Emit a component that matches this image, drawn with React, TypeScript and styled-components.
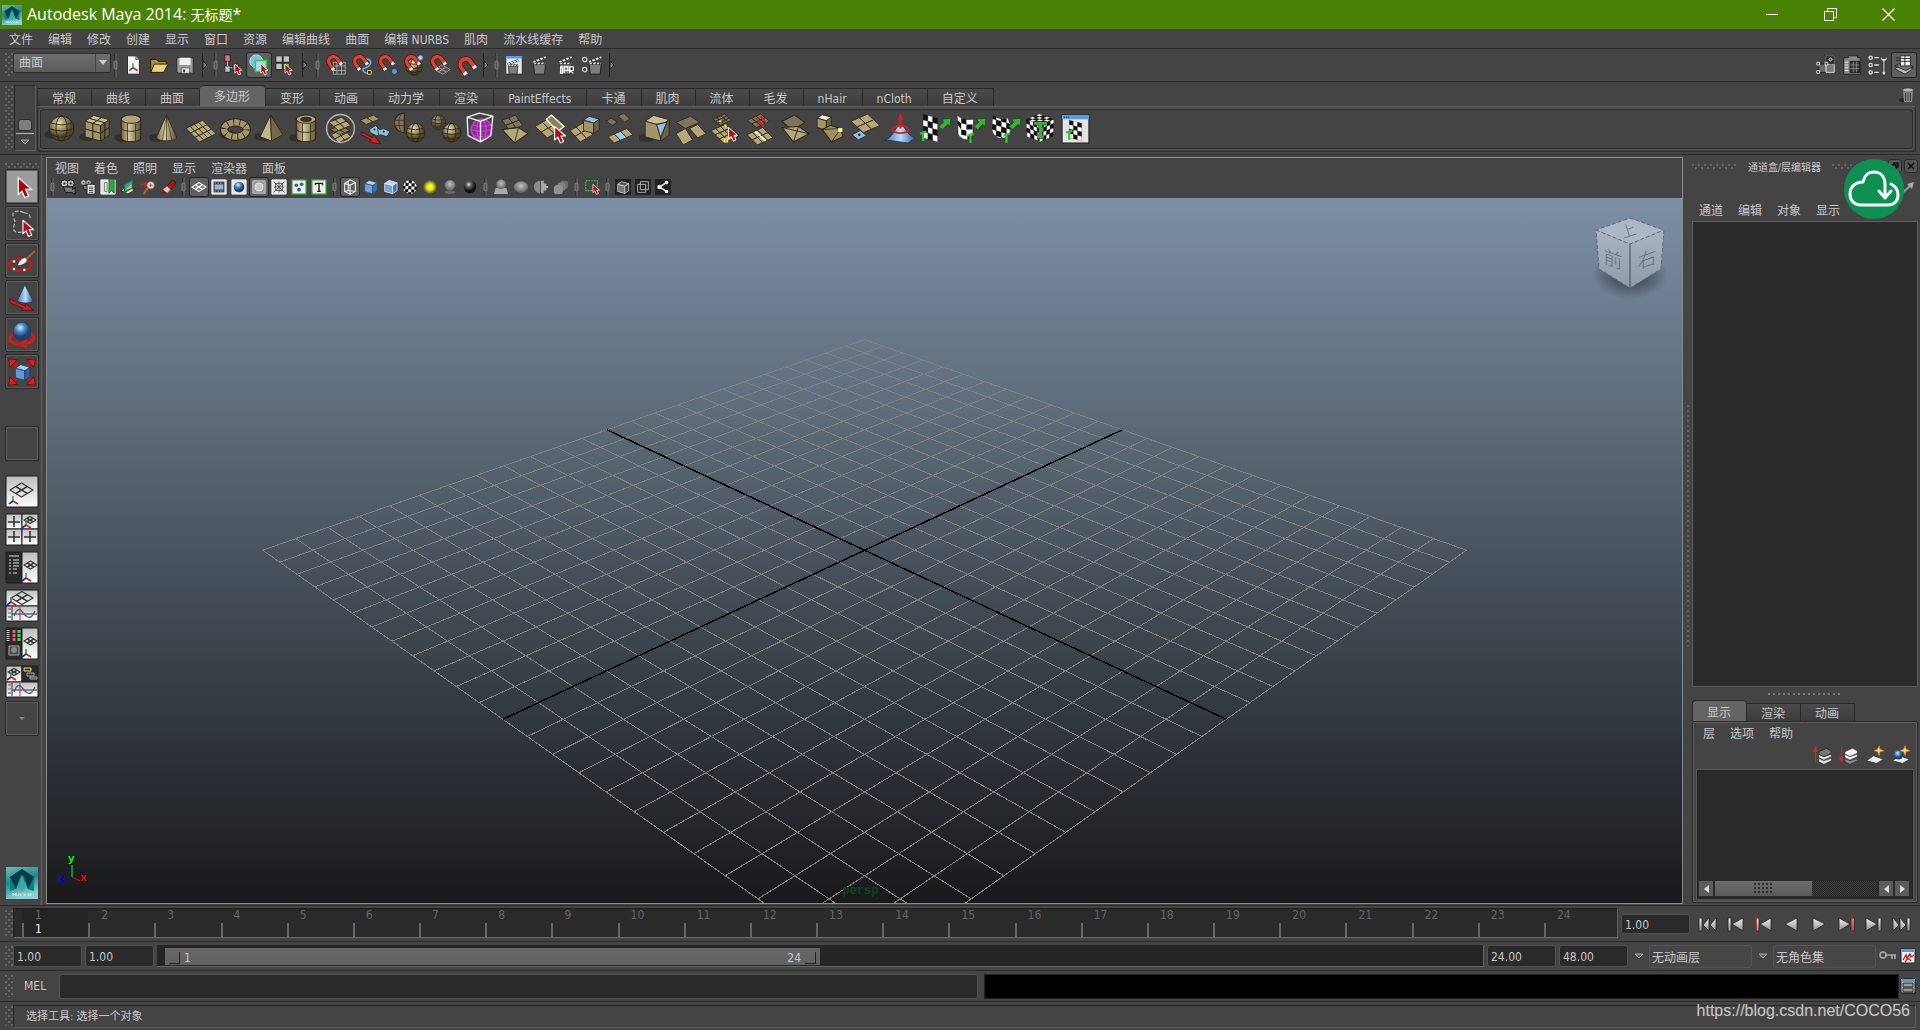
import React, { ReactNode } from 'react';
import styled, { createGlobalStyle, css } from 'styled-components';

const Global = createGlobalStyle`
  * { box-sizing: border-box; }
  html, body { margin: 0; padding: 0; background: #444; }
  body, button, input, select {
    font-family: 'DejaVu Sans Condensed', 'Noto Sans CJK SC', sans-serif;
    font-size: 12px;
    color: #c8c8c8;
  }
  button { background: none; border: 0; padding: 0; margin: 0; }
  svg { display: block; }
`;

/* ---------- drawing helpers ---------- */

type Pt = [number, number];
const TAN = '#a89a6c';
const INK = '#2b2514';

/** A grid of cells spanned by two edge vectors. */
const Sheet = ({ o, u, v, n = 2, m = 2, fill = TAN, alt, line = INK, w = 0.8 }: {
  o: Pt; u: Pt; v: Pt; n?: number; m?: number; fill?: string; alt?: string; line?: string; w?: number;
}) => {
  const at = (a: number, b: number) => `${o[0] + u[0] * a + v[0] * b},${o[1] + u[1] * a + v[1] * b}`;
  const cells: ReactNode[] = [];
  for (let i = 0; i < n; i++) {
    for (let j = 0; j < m; j++) {
      cells.push(
        <polygon
          key={`${i}-${j}`}
          points={[at(i / n, j / m), at((i + 1) / n, j / m), at((i + 1) / n, (j + 1) / m), at(i / n, (j + 1) / m)].join(' ')}
          fill={alt && (i + j) % 2 ? alt : fill}
          stroke={line}
          strokeWidth={w}
          strokeLinejoin="round"
        />
      );
    }
  }
  return <g>{cells}</g>;
};

const Ball = ({ x, y, r, fill = 'url(#tanBall)', line = INK, w = 0.9, o = 1 }: {
  x: number; y: number; r: number; fill?: string; line?: string; w?: number; o?: number;
}) => (
  <g stroke={line} strokeWidth={w} fill="none" opacity={o}>
    <circle cx={x} cy={y} r={r} fill={fill} />
    <ellipse cx={x} cy={y} rx={r * 0.45} ry={r} />
    <path d={`M${x - r * 0.85} ${y - r * 0.45}q${r * 0.85} ${r * 0.3} ${r * 1.7} 0M${x - r} ${y}q${r} ${r * 0.4} ${r * 2} 0M${x - r * 0.85} ${y + r * 0.5}q${r * 0.85} ${r * 0.4} ${r * 1.7} 0`} />
  </g>
);

const Box = ({ x, y, s, a = '#cdbf90', b = '#a3956a', c = '#6d6241', line = INK, n = 1 }: {
  x: number; y: number; s: number; a?: string; b?: string; c?: string; line?: string; n?: number;
}) => (
  <g>
    <Sheet o={[x, y]} u={[s, s * 0.28]} v={[s * 0.55, -s * 0.38]} n={n} m={n} fill={a} line={line} />
    <Sheet o={[x, y]} u={[s, s * 0.28]} v={[0, s]} n={n} m={n} fill={b} line={line} />
    <Sheet o={[x + s, y + s * 0.28]} u={[s * 0.55, -s * 0.38]} v={[0, s]} n={n} m={n} fill={c} line={line} />
  </g>
);

const Cursor = ({ x, y, k = 1 }: { x: number; y: number; k?: number }) => (
  <path
    transform={`translate(${x} ${y}) scale(${k})`}
    d="M0 0v11l2.6-2.3 2 4.6 2.6-1.2-2-4.4h3.6z"
    fill="#b80d12" stroke="#fff" strokeWidth="0.9" strokeLinejoin="round"
  />
);

const Shade = ({ x = 9, y = 24 }: { x?: number; y?: number }) => (
  <ellipse cx={x} cy={y} rx="8" ry="4" fill="#262626" opacity="0.65" />
);

const Magnet = ({ x = 0, y = 0, k = 1.15 }: { x?: number; y?: number; k?: number }) => (
  <g transform={`translate(${x} ${y}) scale(${k}) rotate(-35 8 7)`}>
    <path d="M3.5 13V7a4.5 4.5 0 0 1 9 0v6" fill="none" stroke="#5c0d0a" strokeWidth="4.4" />
    <path d="M3.5 13V7a4.5 4.5 0 0 1 9 0v6" fill="none" stroke="#d8432f" strokeWidth="3.2" />
    <path d="M1.9 11.500h3.200v2.400H1.900zM10.900 11.500h3.200v2.400h-3.200z" fill="#f1f1f1" />
  </g>
);

const Clap = ({ x = 0, y = 0 }: { x?: number; y?: number }) => (
  <g transform={`translate(${x} ${y})`}>
    <path d="M1 10h13l-1 11H2z" fill="#7d7d7d" stroke="#1d1d1d" />
    <path d="M1 10.500h13V8H1z" fill="#eee" stroke="#1d1d1d" strokeWidth="0.5" />
    <path d="M0 6.500L14 1l1 2.600L1 9z" fill="#f4f4f4" stroke="#1d1d1d" strokeWidth="0.6" />
    <path d="M3 5.600l1.500 2M7 4l1.500 2M11 2.400l1.500 2M4 10.500L5.500 8M8 10.500L9.500 8M12 10.500L13 8" stroke="#1d1d1d" strokeWidth="1.300" />
  </g>
);

const Tri3 = ({ x, y }: { x: number; y: number }) => (
  <g strokeWidth="1.6" fill="none">
    <path d={`M${x} ${y}v-5`} stroke="#18b818" />
    <path d={`M${x} ${y}l5 3`} stroke="#e01b1b" />
    <path d={`M${x} ${y}l-4 3`} stroke="#2222e0" />
  </g>
);

const GreenArrow = ({ x, y }: { x: number; y: number }) => (
  <path transform={`translate(${x} ${y})`} d="M0 8l5-4-2-3 9-1-1 8-2-2-5 5z" fill="#3cae3c" stroke="#124a12" strokeWidth="0.7" />
);
const GreenT = ({ x, y }: { x: number; y: number }) => (
  <path transform={`translate(${x} ${y})`} d="M0 2l6-2M3 1v8" stroke="#35c435" strokeWidth="2.2" fill="none" />
);

/* ---------- icon sets ---------- */

const files: Record<string, ReactNode> = {
  new: <><path d="M6 2h9l4 4v16H6z" fill="#f4f4f4" stroke="#222" /><path d="M15 2v4h4" fill="#aaa" stroke="#222" strokeWidth="0.6" /><Tri3 x={12} y={15} /></>,
  open: <><path d="M3 20V6h6l2 2h9v4" fill="#b18d35" stroke="#201a08" /><path d="M3 20l4-9h15l-5 9z" fill="#ecd07c" stroke="#201a08" /></>,
  save: <><path d="M3 4h18v17H5l-2-2z" fill="#9a9a9a" stroke="#222" /><path d="M6 4h12v8H6z" fill="#f0f0f0" /><path d="M8 15h9v6H8z" fill="#ddd" stroke="#333" strokeWidth="0.6" /><path d="M10 17h2v3h-2z" fill="#333" /></>,
};

const modes: Record<string, ReactNode> = {
  hierarchy: <><path d="M3 1h6v7H3z" fill="#e07070" stroke="#222" /><path d="M3 13h6v7H3z" fill="#bbb" stroke="#222" /><path d="M6 8v5M9 15h5" stroke="#ccc" /><path d="M12 11h6v7h-6z" fill="#999" stroke="#222" /><Cursor x={14} y={11} k={0.9} /></>,
  object: <><circle cx="9" cy="8" r="7" fill="#86bdec" stroke="#d6ebff" /><path d="M8 7h12v12H8z" fill="#a7d7f5" stroke="#26d43a" strokeWidth="1.6" /><Cursor x={14} y={11} k={0.9} /></>,
  component: <><path d="M2 2h7v7H2zM10 2h7v7h-7zM2 10h7v7H2z" fill="#c4c4c4" stroke="#222" /><path d="M10 10h7v7h-7z" fill="#3fd050" stroke="#222" /><Cursor x={12} y={11} k={0.9} /></>,
};

const snaps: Record<string, ReactNode> = {
  grid: <><path d="M9 9h13v13H9zM13 9v13M18 9v13M9 13h13M9 18h13" fill="none" stroke="#a9a9a9" /><Magnet /></>,
  curve: <><path d="M12 6c14-3 10 8 4 9s-2 7 5 6" fill="none" stroke="#79aee0" strokeWidth="1.6" /><path d="M18 18h4v4h-4z" fill="#222" stroke="#f1df61" /><Magnet /></>,
  point: <><Magnet /><circle cx="19" cy="19" r="3.4" fill="#5c96d4" stroke="#1d3350" /></>,
  center: <><Ball x={12} y={14} r={9} /><Magnet /><circle cx="19" cy="4" r="3" fill="#9fd0ff" stroke="#2a4c6e" /></>,
  plane: <><Sheet o={[6, 17]} u={[8, -5]} v={[9, 5]} fill="#4a4a4a" line="#b5b5b5" /><Magnet /></>,
  live: <Magnet x={1} y={2} k={1.35} />,
};

const renders: Record<string, ReactNode> = {
  view: <><path d="M3 2h18v20H3z" fill="#e9e9e9" stroke="#222" /><path d="M3 2h18v3H3z" fill="#4f9fe8" /><g transform="translate(5 5) scale(.8)"><Clap /></g></>,
  frame: <Clap x={4} y={1} />,
  ipr: <><Clap x={4} y={1} /><path d="M6 14h2v7H6zM10 21v-7h4v4h-4M16 21v-7h4v4h-4l4 3" fill="none" stroke="#fff" strokeWidth="1.3" /></>,
  settings: <><Clap x={8} y={1} /><circle cx="4" cy="6" r="2.4" fill="none" stroke="#ccc" strokeWidth="1.4" /><circle cx="4" cy="17" r="2.4" fill="none" stroke="#ccc" strokeWidth="1.4" /></>,
};

const sidebars: Record<string, ReactNode> = {
  toolkit: <><path d="M4 11h17v9H4z" fill="#6c6c6c" stroke="#1f1f1f" /><path d="M12 11h9v9h-9z" fill="#777" stroke="#eee" /><path d="M12 2h9v9h-9z" fill="#2a2a2a" stroke="#777" strokeDasharray="2 1" /><path d="M2 9h3v3H2zM2 18h3v3H2zM11 9h3v3h-3z" fill="#444" stroke="#ddd" /><circle cx="17" cy="6" r="1.600" fill="none" stroke="#eee" /></>,
  attribute: <><path d="M3 4h5V2h10v2h3v18H3z" fill="#8a8a8a" stroke="#1f1f1f" /><path d="M4 9h4M4 12h4M4 15h4M4 18h4" stroke="#eee" /><path d="M10 8h10v12H10z" fill="#3a3a3a" stroke="#111" /><path d="M13.500 8v12M17 8v12M10 12h10M10 16h10" stroke="#999" strokeWidth="0.700" /></>,
  tool: <><g fill="none" stroke="#ddd" strokeWidth="1.4"><circle cx="4" cy="4" r="1.800" /><circle cx="4" cy="12" r="1.800" /><circle cx="4" cy="20" r="1.800" /><path d="M8 4h5M8 12h5M8 20h5" /></g><path d="M15 2v4l2.500 2v11a2 2 0 1 0 2 0V8L22 6V2l-2 3h-3z" fill="#ddd" stroke="#222" strokeWidth="0.7" /></>,
  channel: <><path d="M2 16l8-5 12 5-9 6z" fill="#bcbcbc" stroke="#222" /><path d="M2 13l8-4 12 5-8 4z" fill="#777" stroke="#222" /><path d="M8 2h11v11H8z" fill="#f5f5f5" stroke="#222" /><path d="M8 5h11M8 8h11M3 4h4M3 7h4M13 2v11" stroke="#222" /></>,
};

const shelf: [string, ReactNode][] = [
  ['球体', <><Shade x={8} y={22} /><Ball x={17} y={16} r={12} /></>],
  ['立方体', <><Shade x={8} y={24} /><Box x={6} y={9} s={15} n={2} /></>],
  ['圆柱体', <><Shade x={8} y={25} /><path d="M7 7v18c0 5 19 5 19 0V7z" fill="url(#tanBar)" stroke={INK} /><ellipse cx="16.500" cy="7" rx="9.500" ry="4" fill="#b3a578" stroke={INK} /><path d="M7 15c0 5 19 5 19 0M13 11v17M21 11v17" fill="none" stroke={INK} strokeWidth="0.8" /></>],
  ['圆锥体', <><Shade x={8} y={25} /><path d="M17 3L7 25c2 4 18 4 20 0z" fill="url(#tanBar)" stroke={INK} strokeWidth="0.8" /><path d="M17 3l-4 24M17 3v25M17 3l5 24" stroke={INK} strokeWidth="0.6" /></>],
  ['平面', <Sheet o={[2, 16]} u={[16, -8]} v={[13, 13]} n={4} m={3} fill="#b5a778" />],
  ['圆环', <><Shade x={8} y={22} /><ellipse cx="16" cy="17" rx="11" ry="7" fill="none" stroke={INK} strokeWidth="8" /><ellipse cx="16" cy="17" rx="11" ry="7" fill="none" stroke="#a4966a" strokeWidth="6" /><ellipse cx="16" cy="17" rx="11" ry="7" fill="none" stroke={INK} strokeWidth="6" strokeDasharray="0.8 5" /></>],
  ['棱锥', <><Shade x={8} y={24} /><path d="M16 3L6 24l11 4z" fill="#c4b688" stroke={INK} strokeWidth="0.8" /><path d="M16 3l1 25 11-6z" fill="#776b47" stroke={INK} strokeWidth="0.8" /></>],
  ['管道', <><Shade x={8} y={25} /><path d="M7 7v18c0 5 19 5 19 0V7z" fill="url(#tanBar)" stroke={INK} /><ellipse cx="16.500" cy="7" rx="9.500" ry="4" fill="#b3a578" stroke={INK} /><ellipse cx="16.500" cy="7" rx="5" ry="2" fill="#3b341f" stroke={INK} /><path d="M7 16c0 5 19 5 19 0M13 11v17M21 11v17" fill="none" stroke={INK} strokeWidth="0.8" /></>],
  ['结合', <><Sheet o={[7, 22]} u={[12, -6]} v={[7, 8]} fill="#b5a778" /><Sheet o={[6, 17]} u={[10, -4]} v={[9, 5]} fill="#8d805a" /><Sheet o={[5, 10]} u={[12, -5]} v={[9, 8]} fill="#b5a778" /><circle cx="16" cy="16" r="13.500" fill="none" stroke="#b4b4b4" strokeWidth="1.4" /></>],
  ['分离', <><Sheet o={[1, 8]} u={[13, -5]} v={[6, 4]} m={1} fill="#a39567" /><path d="M10 17l6-4 4 4 4-1 6 3-3 5-6-2-4 1-6-3z" fill="#8cc0de" stroke={INK} strokeWidth="0.8" /><path d="M18 15l1 7" stroke={INK} strokeWidth="0.8" /><circle cx="15" cy="17" r="1" fill="#123" /><circle cx="24" cy="19" r="1" fill="#123" /><path d="M2 19l11 6 1-3 7 9-11-2 2-2L2 22z" fill="#d41f26" stroke="#4d0606" strokeWidth="0.7" /></>],
  ['镜像', <><path d="M10 1a9 9 0 0 0 0 19z" fill="#7d7459" stroke={INK} /><path d="M10 2v17M2 8h8M2 13h8M7 2c-3 5-3 12 0 17" fill="none" stroke={INK} strokeWidth="0.7" /><Ball x={21} y={20} r={9} /></>],
  ['复制', <><Ball x={9} y={10} r={7} o={0.6} /><Ball x={22} y={20} r={9} /></>],
  ['代理', <><Ball x={17} y={17} r={10} fill="#7d3a88" line="#e22fe6" w={1.2} /><path d="M3 5l13 4v20L4 23zM16 9l12-5-2 19-10 6M3 5l12-4 13 3" fill="none" stroke="#f2f2f2" strokeWidth="1.300" strokeLinejoin="round" /></>],
  ['减少', <><Sheet o={[3, 8]} u={[13, -5]} v={[7, 10]} fill="#7d7459" /><path d="M3 17l12 13 13-9-9-6z" fill="#b5a778" stroke={INK} /><path d="M3 17l16-2-4 15" fill="none" stroke={INK} strokeWidth="0.8" /></>],
  ['分割', <><Sheet o={[1, 14]} u={[14, -8]} v={[12, 11]} n={2} m={2} fill="#b5a778" /><path d="M12 7l5-4 12 11-6 5z" fill="#8c8055" stroke="#f2f2f2" strokeWidth="1.4" /><Cursor x={20} y={14} k={1.2} /></>],
  ['挤出', <><Sheet o={[1, 18]} u={[12, -7]} v={[10, 11]} fill="#b5a778" /><Box x={14} y={8} s={10} a="#8cc0e6" /></>],
  ['桥接', <><Sheet o={[2, 9]} u={[5, -3]} v={[6, 4]} n={1} m={1} fill="#7d7459" /><Sheet o={[14, 4]} u={[5, -3]} v={[6, 6]} n={1} m={1} fill="#7d7459" /><Sheet o={[4, 24]} u={[18, -8]} v={[6, 6]} n={3} m={1} fill="#b5a778" alt="#9fcdf0" /></>],
  ['附加', <><Shade x={7} y={25} /><Box x={6} y={9} s={15} /><path d="M17 12l10-2-6 15z" fill="#8cc0e6" stroke={INK} /></>],
  ['合并', <><Sheet o={[2, 10]} u={[14, -6]} v={[9, 6]} n={1} m={1} fill="#7d7459" /><Sheet o={[2, 21]} u={[9, -5]} v={[7, 11]} n={1} m={1} fill="#b5a778" /><Sheet o={[15, 16]} u={[8, -4]} v={[8, 9]} n={1} m={1} fill="#b5a778" /></>],
  ['目标焊接', <><Sheet o={[4, 7]} u={[11, -5]} v={[7, 6]} fill="#7d7459" n={3} m={3} /><Sheet o={[2, 18]} u={[14, -6]} v={[12, 12]} fill="#b5a778" n={3} m={3} /><path d="M10 8h2v2h-2zM15 12h2v2h-2z" fill="#f5ee55" /><path d="M15 26h3v3h-3z" fill="none" stroke="#f5ee55" strokeWidth="1.200" /><Cursor x={19} y={15} /></>],
  ['折痕', <><Sheet o={[3, 8]} u={[13, -6]} v={[9, 7]} fill="#7d7459" n={3} /><path d="M12 6l7 8M16 4l6 7" stroke="#d41f26" strokeWidth="1.800" /><Sheet o={[3, 22]} u={[15, -7]} v={[10, 10]} fill="#b5a778" n={3} /><path d="M11 19l10 9" stroke="#fff" strokeWidth="1.4" /></>],
  ['三角化', <><path d="M3 9l12-6 10 7-12 8z" fill="#7d7459" stroke={INK} /><path d="M3 15l11 14 15-8-10-7z" fill="#b5a778" stroke={INK} /><path d="M3 15l26 6M14 29l5-15" stroke={INK} strokeWidth="0.9" /></>],
  ['倒角', <><Box x={3} y={6} s={9} a="#e8e8e0" /><path d="M8 17l9 12 11-5-2-8-10-3z" fill="#9d8f63" stroke={INK} /><path d="M8 17l18-1-9 13" fill="none" stroke={INK} strokeWidth="0.8" /><path d="M24 16h3v3h-3z" fill="#fff" stroke="#f5ee55" /></>],
  ['提取', <><Sheet o={[2, 9]} u={[16, -7]} v={[12, 11]} fill="#b5a778" /><Sheet o={[3, 22]} u={[8, -4]} v={[6, 5]} n={1} m={1} fill="#8cc0e6" /><circle cx="10" cy="22" r="1.200" fill="#123" /></>],
  ['雕刻', <><path d="M1 27c9-3 11-15 15-15s6 12 15 13l-8 5z" fill="url(#blueBar)" stroke="#1c2c4a" strokeWidth="0.7" /><ellipse cx="16" cy="17" rx="8" ry="3.500" fill="none" stroke="#d41f26" strokeWidth="1.800" /><path d="M16 16V6" stroke="#d41f26" strokeWidth="1.800" /><path d="M16 1l3 7h-6z" fill="#d41f26" /></>],
  ['平面映射', <><Sheet o={[4, 2]} u={[14, 4]} v={[0, 23]} n={3} m={4} fill="#111" alt="#fff" line="#333" w={0.3} /><GreenArrow x={19} y={6} /><GreenT x={1} y={19} /></>],
  ['圆柱映射', <><path d="M3 3c4 4 10 5 16 4l-1 19c-6 2-10 1-14-4z" fill="#fff" stroke="#222" strokeWidth="0.6" /><path d="M7 6l5 1v5l-5-1zM3 8l4 3v6l-3-4zM12 12h6v5h-6zM7 17l5 1v5l-5-1zM13 23h5v3l-5 1z" fill="#111" /><GreenArrow x={19} y={6} /><GreenT x={13} y={21} /></>],
  ['球形映射', <><clipPath id="ballClip"><path d="M4 3c3 4 9 5 14 3l3 8c0 16-18 14-18 1z" /></clipPath><g clipPath="url(#ballClip)"><Sheet o={[2, 1]} u={[20, 6]} v={[0, 26]} n={4} m={5} fill="#111" alt="#fff" line="#333" w={0.3} /></g><GreenArrow x={19} y={6} /><GreenT x={14} y={21} /></>],
  ['自动映射', <><Sheet o={[2, 7]} u={[14, 5]} v={[1, 17]} n={4} m={4} fill="#111" alt="#fff" line="#333" w={0.3} /><Sheet o={[16, 12]} u={[13, -5]} v={[-1, 17]} n={4} m={4} fill="#111" alt="#fff" line="#333" w={0.3} /><Sheet o={[2, 7]} u={[14, 5]} v={[13, -5]} n={4} m={4} fill="#111" alt="#fff" line="#333" w={0.3} /><path d="M10 11h12M16 11v13M13 24h6" stroke="#124a12" strokeWidth="4" /><path d="M10 11h12M16 11v13M13 24h6" stroke="#3fae3f" strokeWidth="2.800" /></>],
  ['纹理编辑器', <><path d="M3 3h26v27H3z" fill="#e4e4e4" stroke="#222" /><path d="M3 3h26v4H3z" fill="#4f9fe8" /><path d="M5 5h1M7 5h1M9 5h1" stroke="#123" /><Sheet o={[10, 8]} u={[12, 3]} v={[0, 17]} n={3} m={4} fill="#111" alt="#fff" line="#333" w={0.3} /><GreenT x={7} y={18} /></>],
];

const frame = (inner: ReactNode) => <><path d="M1 1h16v16H1z" fill="#e4e4e4" stroke="#f5f5f5" />{inner}</>;
const greenFrame = (inner: ReactNode) => <><path d="M1 1h16v16H1z" fill="#eee" stroke="#2b9a2b" strokeWidth="1.4" />{inner}</>;
const camera = <><circle cx="5" cy="5" r="4" fill="#c4c4c4" stroke="#1a1a1a" /><circle cx="12" cy="5" r="4" fill="#b0b0b0" stroke="#1a1a1a" /><circle cx="5" cy="5" r="1.200" fill="#222" /><circle cx="12" cy="5" r="1.200" fill="#222" /><path d="M4 9h10v3l3-2v7l-4-2H6z" fill="#7c7c7c" stroke="#111" /></>;

const panelIcons: ([string, ReactNode, boolean?] | null)[] = [
  null,
  ['选择摄影机', camera],
  ['摄影机属性', <><g transform="scale(.8)">{camera}</g><path d="M8 6h9v11H8z" fill="#f0f0f0" stroke="#222" /><path d="M10 9h5M10 11h5M10 13h5M10 15h5" stroke="#333" /></>],
  ['书签', frame(<><path d="M5 4h3v10H5z" fill="none" stroke="#777" /><path d="M10 0h6v16l-3-3-3 3z" fill="#2bab34" stroke="#0d4d13" strokeWidth="0.700" /></>)],
  ['图像平面', <><path d="M1 13l6-4 10 3-8 5z" fill="#ddd" stroke="#222" /><path d="M5 6l9-5v9l-9 5z" fill="#4f86d8" stroke="#1c7a1c" strokeWidth="1.400" /><path d="M6 12l7-6v4z" fill="#e2c33f" /></>],
  ['二维平移缩放', <><path d="M6 1v11M1 6h11" stroke="#d62424" strokeWidth="1.600" strokeDasharray="2 1" /><circle cx="12" cy="7" r="4" fill="#f0d8d8" stroke="#888" /><path d="M12 5v4M10 7h4" stroke="#d62424" /><path d="M9 10l-5 7" stroke="#a86b22" strokeWidth="2.200" /></>],
  ['油性铅笔', <><path d="M8 8l6-7 4 3-6 8z" fill="#b81414" stroke="#3a0505" /><path d="M3 12l5-4 4 4-4 4z" fill="#e8c8b0" stroke="#555" strokeWidth="0.600" /><path d="M3 12l-1 5 6-1z" fill="#8c1212" /></>],
  null,
  ['栅格', <Sheet o={[1, 9]} u={[8, -5]} v={[8, 5]} fill="#777" line="#f2f2f2" w={1.2} />, true],
  ['胶片门', frame(<><path d="M3 3h12v12H3z" fill="#1d1d1d" /><path d="M4 6h10v6H4z" fill="#8db8e0" /><path d="M4 4.500h10M4 13.500h10" stroke="#eee" strokeDasharray="2 1" /></>)],
  ['分辨率门', frame(<circle cx="9" cy="9" r="6" fill="url(#blueBall)" />)],
  ['门遮罩', <><path d="M2 2h14v14H2z" fill="#9b9b9b" stroke="#ccc" /><circle cx="9" cy="9" r="4.500" fill="#c9c9c9" stroke="#eee" /></>, true],
  ['区域图', frame(<path d="M3 3l12 12M15 3L3 15M9 3v12M3 9h12M5 5h8v8H5z" fill="none" stroke="#555" />)],
  ['安全动作', greenFrame(<><circle cx="6" cy="7" r="2" fill="#2b5b9a" /><circle cx="12" cy="6" r="2" fill="#2b5b9a" /><circle cx="9" cy="12" r="2.200" fill="#2b5b9a" /></>)],
  ['安全标题', greenFrame(<path d="M5 7V5h8v2M9 5v9M7 14h4" fill="none" stroke="#111" strokeWidth="1.500" />)],
  null,
  ['线框', <g fill="none" stroke="#f0f0f0" strokeWidth="1.200"><path d="M3 5l6 2v10l-6-3zM9 7l6-3v10l-6 3M3 5l6-4 6 3M7 3v10l-4 1M7 13l8 1" /></g>, true],
  ['着色', <Box x={3} y={5} s={9} a="#b6d6f5" b="#6fa5dc" c="#3f74ae" line="#2a4f7c" />],
  ['着色线框', <Box x={3} y={5} s={9} a="#b6d6f5" b="#6fa5dc" c="#3f74ae" line="#f5f5f5" />],
  ['纹理', <><clipPath id="checkClip"><circle cx="9" cy="9" r="7.500" /></clipPath><g clipPath="url(#checkClip)"><Sheet o={[1, 1]} u={[17, 1]} v={[-1, 17]} n={5} m={5} fill="#111" alt="#fff" w={0} /></g></>],
  ['灯光', <circle cx="9" cy="9" r="8" fill="url(#yellowGlow)" />],
  ['阴影', <><ellipse cx="9" cy="15" rx="6" ry="2" fill="#666" /><circle cx="9" cy="7" r="6" fill="url(#grayBall)" /></>],
  ['遮挡', <circle cx="9" cy="9" r="7" fill="url(#darkBall)" />],
  null,
  ['隔离', <><path d="M1 17l2-7h12l2 7z" fill="#aaa" /><circle cx="9" cy="6" r="5.500" fill="url(#grayBall)" /></>],
  ['运动模糊', <ellipse cx="9" cy="9" rx="8" ry="6.500" fill="url(#grayBall)" />],
  ['抗锯齿', <><path d="M8 2a7 7 0 0 0 0 14z" fill="#8a8a8a" /><path d="M9 2v14h3v-3h3v-3h2V8h-2V5h-3V2z" fill="#a8a8a8" /></>],
  ['景深', <><rect x="8" y="2" width="9" height="9" rx="3" fill="#6c6c6c" /><rect x="5" y="4" width="9" height="9" rx="3" fill="#808080" /><rect x="1" y="7" width="10" height="10" rx="3" fill="#929292" /></>],
  null,
  ['选择项', <><path d="M2 2h13v11H2z" fill="none" stroke="#35d335" strokeWidth="1.300" strokeDasharray="2 1" /><Cursor x={10} y={6} k={0.85} /></>],
  null,
  ['X 射线', <><path d="M0 0h18v18H0z" fill="#222" /><Box x={3} y={6} s={8} a="#555" b="#777" c="#444" line="#ddd" /></>],
  ['X 射线活动', <><path d="M0 0h18v18H0z" fill="#222" /><path d="M3 6h9v9H3zM6 3h9v9H6z" fill="none" stroke="#bbb" /></>],
  ['X 射线关节', <><path d="M0 0h18v18H0z" fill="#222" /><path d="M5 9l8-5M5 9l8 5" stroke="#ddd" strokeWidth="1.800" /><circle cx="5" cy="9" r="2.500" fill="#eee" /><circle cx="13" cy="4" r="2" fill="#eee" /><circle cx="13" cy="14" r="2" fill="#eee" /></>],
];

const tools: [string, ReactNode][] = [
  ['选择', <path d="M12 6v18l4-3.500 3 7 4-2-3-7h6z" fill="#a8090d" stroke="#fff" strokeWidth="1.300" />],
  ['套索', <><path d="M18 4c-8-4-14-1-11 5s0 7 0 12 8 5 12 2" fill="none" stroke="#bbb" strokeWidth="1.300" strokeDasharray="4 2" /><path d="M18 4c5 0 7 3 7 7" fill="none" stroke="#bbb" strokeWidth="1.300" strokeDasharray="4 2" /><Cursor x={17} y={12} k={1.3} /></>],
  ['绘制选择', <><ellipse cx="14" cy="20" rx="12" ry="6.500" fill="none" stroke="#d01515" strokeWidth="2.400" /><path d="M11 21c2-7 6-8 9-9l2 3c-1 3-5 6-11 6z" fill="#f2f2f2" stroke="#222" strokeWidth="0.700" /><path d="M20 12l9-8 2 2-9 9z" fill="#a0602e" stroke="#222" strokeWidth="0.500" /><path d="M6 15h3v3H6zM6 23h3v3H6zM17 24h3v3h-3z" fill="#fff7bf" stroke="#333" strokeWidth="0.600" /></>],
  ['移动', <><path d="M3 17l17 8-1-4 9 8-13 0 2-2L3 21z" fill="#d31b1b" stroke="#4d0606" strokeWidth="0.700" /><path d="M19 2l9 17c-2 3-14 3-17 0z" fill="url(#blueBar)" stroke="#17304d" strokeWidth="0.700" /></>],
  ['旋转', <><path d="M6 15c-7 6 0 11 7 10M25 14c8 5 1 11-7 11" fill="none" stroke="#d31b1b" strokeWidth="3.400" /><path d="M21 19l-9 6 9 6z" fill="#d31b1b" /><circle cx="16" cy="12" r="9.500" fill="url(#blueBall)" stroke="#17304d" strokeWidth="0.600" /></>],
  ['缩放', <><path d="M5 4l22 24M27 4L5 28" stroke="#c91414" strokeWidth="3.200" /><path d="M2 2l9 1-8 8zM30 2l-9 1 8 8zM2 30l9-1-8-8zM30 30l-9-1 8-8z" fill="#e01b1b" stroke="#4d0606" strokeWidth="0.600" /><Box x={9} y={12} s={10} a="#a6cdf2" b="#5f9ad8" c="#2f629c" line="#1c3e66" /></>],
];

const paper = (x: number, y: number, w: number, h: number, dark = false) => (
  <path d={`M${x} ${y}h${w}v${h}h${-w}z`} fill={dark ? '#2a2a2a' : 'url(#paper)'} stroke="#1c1c1c" />
);
const mesh = (x: number, y: number, k: number) => (
  <Sheet o={[x, y]} u={[10 * k, -6 * k]} v={[10 * k, 6 * k]} fill="none" line="#333" w={1.2} />
);
const wave = (
  <>{paper(1, 17, 32, 15)}<path d="M3 20h3" stroke="#d22" /><path d="M3 24h3" stroke="#2a2" /><path d="M3 28h3" stroke="#22d" /><path d="M7 18v13M7 25h25" stroke="#333" /><path d="M15 18v13" stroke="#e02020" /><path d="M9 27c5-13 8-3 12 0s6 1 9-5" fill="none" stroke="#3a628c" strokeWidth="1.300" /></>
);
const layouts: [string, ReactNode][] = [
  ['单个透视视图', <>{paper(1, 1, 32, 31)}{mesh(5, 15, 1.15)}<Tri3 x={8} y={26} /></>],
  ['四个视图', <>{paper(1, 1, 16, 15)}{paper(17, 1, 16, 15)}{paper(1, 16, 16, 16)}{paper(17, 16, 16, 16)}<path d="M9 3v11M3 9h12M9 18v11M3 24h12M25 18v11M19 24h12" stroke="#333" strokeWidth="1.600" />{mesh(19, 7, 0.6)}<Tri3 x={21} y={12} /></>],
  ['大纲视图', <>{paper(1, 1, 16, 31, true)}{paper(17, 1, 16, 31)}<path d="M4 5h10M4 9h2M8 9h6M4 12h2M8 12h6M4 15h2M8 15h6M4 18h2M8 18h4M4 22h2M8 22h4" stroke="#ddd" />{mesh(19, 14, 0.65)}<Tri3 x={21} y={27} /></>],
  ['透视与曲线图', <>{paper(1, 1, 32, 16)}{mesh(6, 9, 1.1)}<Tri3 x={6} y={13} />{wave}</>],
  ['超图与透视', <>{paper(1, 1, 16, 31, true)}{paper(17, 1, 16, 31)}<path d="M3 3v12" stroke="#ccc" strokeWidth="3" strokeDasharray="1 1" /><path d="M9 3v12" stroke="#d66" strokeWidth="3" strokeDasharray="3 1" /><path d="M14 3v12" stroke="#5c5" strokeWidth="3" strokeDasharray="3 1" /><path d="M4 19h10v9H4z" fill="#444" stroke="#aaa" /><circle cx="9" cy="23" r="3" fill="#888" />{mesh(19, 14, 0.65)}<Tri3 x={21} y={27} /></>],
  ['透视超图曲线', <>{paper(1, 1, 16, 16)}{paper(17, 1, 16, 16, true)}{mesh(3, 7, 0.6)}<Tri3 x={6} y={12} /><path d="M19 3h7v3h-7z" fill="#333" stroke="#e9e36c" /><path d="M22 8h7v3h-7zM25 12h7v2h-7z" fill="#333" stroke="#aaa" />{wave}</>],
];

const playback: [string, string, boolean, number?][] = [
  ['转到开头', 'M1 4h3v13H1zM11 4v13l-6-6zM18 4v13l-6-6z', false],
  ['后退一帧', 'M2 4h3v13H2zM17 4v13L6 10z', false],
  ['后退到关键帧', 'M3 4h3v13H3zM18 4v13L7 10z', true, 3],
  ['向后播放', 'M16 4v13L4 10z', false],
  ['向前播放', 'M4 4v13l12-7z', false],
  ['前进到关键帧', 'M2 4v13l11-7zM14 4h3v13h-3z', true, 15],
  ['前进一帧', 'M2 4v13l11-7zM14 4h3v13h-3z', false],
  ['转到结尾', 'M1 4v13l6-6zM8 4v13l6-6zM15 4h3v13h-3z', false],
];

const layerIcons: [string, ReactNode][] = [
  ['上移层', <><path d="M3 20V7" stroke="#d22" strokeWidth="1.500" /><path d="M3 1l3 7H0z" fill="#d22" /><path d="M7 16l6 3 9-3v3l-9 4-6-3zM7 11l6 3 9-3v3l-9 4-6-3z" fill="#e6e6e6" stroke="#222" strokeWidth="0.600" /><path d="M7 8l9-4 6 3v3l-9 4-6-3z" fill="#777" stroke="#222" /></>],
  ['下移层', <><path d="M3 2v14" stroke="#d22" strokeWidth="1.500" /><path d="M3 22l3-7H0z" fill="#d22" /><path d="M7 16l6 3 9-3v3l-9 4-6-3z" fill="#8a8a8a" stroke="#222" strokeWidth="0.600" /><path d="M7 11l6 3 9-3v3l-9 4-6-3zM7 8l9-4 6 3v3l-9 4-6-3z" fill="#f3f3f3" stroke="#222" strokeWidth="0.600" /></>],
  ['新建空层', <><path d="M2 19l8-6 12 4-8 5z" fill="#eee" stroke="#222" strokeWidth="0.700" /><path d="M17 1l1 4 5 2-5 1-1 5-2-5-4-1 4-2z" fill="#ffcf5f" stroke="#e08a1a" strokeWidth="0.600" /></>],
  ['从选定对象新建层', <><path d="M2 19l8-6 12 4-8 5z" fill="#eee" stroke="#222" strokeWidth="0.700" /><circle cx="9" cy="12" r="5.500" fill="url(#blueBall)" /><path d="M17 1l1 4 5 2-5 1-1 5-2-5-4-1 4-2z" fill="#ffcf5f" stroke="#e08a1a" strokeWidth="0.600" /></>],
];

const MayaLogo = ({ size }: { size: number }) => (
  <svg width={size} height={size} viewBox="0 0 32 32" aria-label="Maya">
    <path d="M0 0h32v32H0z" fill="url(#logoBg)" />
    <path d="M4 24V10L16 2l12 8v14l-6-2-3-9-3-2-3 2-3 9z" fill="#087f81" />
    <path d="M16 2L4 10l6 12 4-12 2-2 2 2 4 12 6-12z" fill="#033c42" />
    <path d="M16 8l-4 12 4 4 4-4z" fill="#36aaa6" />
    <path d="M7 29v-3l1.500 2 1.500-2v3M12 29l1.500-3 1.500 3M17 26l1.500 1.500L20 26M18.500 27.500V29M22 29l1.500-3 1.500 3" fill="none" stroke="#e8ffff" strokeWidth="0.900" />
  </svg>
);

const Defs = () => (
  <HiddenSvg aria-hidden="true">
    <defs>
      <radialGradient id="tanBall" cx=".4" cy=".3"><stop offset="0" stopColor="#efe3b8" /><stop offset=".5" stopColor="#a4966a" /><stop offset="1" stopColor="#4f4629" /></radialGradient>
      <linearGradient id="tanBar"><stop offset="0" stopColor="#6e6341" /><stop offset=".4" stopColor="#d6c99c" /><stop offset="1" stopColor="#574d2f" /></linearGradient>
      <linearGradient id="blueBar"><stop offset="0" stopColor="#3b76b8" /><stop offset=".5" stopColor="#b5dbff" /><stop offset="1" stopColor="#2c5a92" /></linearGradient>
      <radialGradient id="blueBall" cx=".4" cy=".3"><stop offset="0" stopColor="#d8efff" /><stop offset=".5" stopColor="#4b8bc9" /><stop offset="1" stopColor="#1c436f" /></radialGradient>
      <radialGradient id="grayBall" cx=".5" cy=".4"><stop offset="0" stopColor="#c4c4c4" /><stop offset="1" stopColor="#6e6e6e" /></radialGradient>
      <radialGradient id="darkBall" cx=".4" cy=".3"><stop offset="0" stopColor="#ddd" /><stop offset=".4" stopColor="#666" /><stop offset="1" stopColor="#111" /></radialGradient>
      <radialGradient id="yellowGlow"><stop offset="0" stopColor="#fffc60" /><stop offset=".4" stopColor="#f2ee00" /><stop offset="1" stopColor="#f2ee00" stopOpacity="0" /></radialGradient>
      <linearGradient id="paper" x2="0" y2="1"><stop offset="0" stopColor="#bdbdbd" /><stop offset="1" stopColor="#fff" /></linearGradient>
      <linearGradient id="metal" x2="0" y2="1"><stop offset="0" stopColor="#f2f2f2" /><stop offset="1" stopColor="#8e8e8e" /></linearGradient>
      <linearGradient id="logoBg" x2="0.300" y2="1"><stop offset="0" stopColor="#6fb9ba" /><stop offset=".5" stopColor="#1b8b8c" /><stop offset="1" stopColor="#8fd0d0" /></linearGradient>
    </defs>
  </HiddenSvg>
);

/* ---------- styled parts ---------- */

const HiddenSvg = styled.svg`position: absolute; width: 0; height: 0;`;

const Window = styled.div`
  display: flex;
  flex-direction: column;
  height: 100vh;
  min-height: 860px;
  background: #444;
  overflow: hidden;
`;

const TitleBar = styled.header`
  flex: none;
  display: flex;
  align-items: center;
  height: 29px;
  padding: 0 3px 0 2px;
  background: #4a8206;
`;
const Title = styled.h1`
  flex: 1;
  margin: 0 0 0 5px;
  font: 400 16px/28px 'Open Sans', 'Noto Sans CJK SC', sans-serif;
  color: #fff;
`;
const SceneName = styled.span`font-size: 14px;`;
const WinButton = styled.button`
  width: 58px;
  height: 29px;
  display: grid;
  place-items: center;
`;

const MenuRow = styled.nav<{ $h: number; $pad: number }>`
  flex: none;
  display: flex;
  align-items: center;
  gap: 15px;
  height: ${p => p.$h}px;
  padding: 2px 0 0 ${p => p.$pad}px;
`;
const MenuItem = styled.button`
  line-height: 16px;
  white-space: nowrap;
`;

const Row = styled.section<{ $h: number; $right?: number }>`
  flex: none;
  display: flex;
  align-items: center;
  height: ${p => p.$h}px;
  padding: 0 ${p => p.$right ?? 4}px 0 5px;
  border-top: 1px solid #2c2c2c;
`;

const Grip = styled.span<{ $wide?: boolean }>`
  flex: none;
  align-self: ${p => (p.$wide ? 'center' : 'stretch')};
  width: ${p => (p.$wide ? 'auto' : '8px')};
  ${p => p.$wide && css`height: 5px; flex: 1;`}
  margin: ${p => (p.$wide ? '0' : '4px 0')};
  background-image: radial-gradient(circle at 1px 1px, #666 1px, transparent 1px),
    radial-gradient(circle at 4px 4px, #666 1px, transparent 1px);
  background-size: 6px 6px;
`;

const Select = styled.select`
  appearance: none;
  width: 98px;
  height: 20px;
  padding: 0 5px;
  border: 1px solid #2e2e2e;
  border-radius: 2px;
  background: linear-gradient(#6e6e6e, #5c5c5c);
`;
const SelectWrap = styled.label`
  position: relative;
  display: flex;
  margin-bottom: 4px;
`;
const SelectArrow = styled.span`
  position: absolute;
  inset: 1px 1px 1px auto;
  width: 15px;
  border-left: 1px solid #444;
  display: grid;
  place-items: center;
  pointer-events: none;
`;

const IconButton = styled.button<{ $w: number; $h?: number; $on?: boolean }>`
  flex: none;
  width: ${p => p.$w}px;
  height: ${p => p.$h ?? p.$w}px;
  display: grid;
  place-items: center;
  border-radius: 3px;
  ${p => p.$on && css`background: #5f5f5f; box-shadow: inset 0 0 0 1px #262626;`}
`;

const HandleBox = styled.span<{ $w: number }>`
  flex: none;
  width: ${p => p.$w}px;
  display: grid;
  place-items: center;
`;
const Handle = ({ w = 9, h = 24 }: { w?: number; h?: number }) => (
  <HandleBox $w={w}>
    <svg width="5" height={h} viewBox={`0 0 5 ${h}`}>
      <path d={`M2 0v${h}`} stroke="#222" /><path d={`M3 0v${h}`} stroke="#6a6a6a" />
      <rect x="1" y={h / 2 - 4} width="3" height="8" rx="1.500" fill="#555" stroke="#999" strokeWidth="0.700" />
    </svg>
  </HandleBox>
);
const More = () => (
  <HandleBox $w={13}>
    <svg width="7" height="24" viewBox="0 0 7 24">
      <path d="M1.500 0v24" stroke="#242424" /><path d="M2 8l4 4-4 4z" fill="#777" stroke="#1f1f1f" />
    </svg>
  </HandleBox>
);
const Spacer = styled.span`flex: 1;`;

const ShelfSide = styled.div`
  flex: none;
  display: flex;
  flex-direction: column;
  justify-content: flex-end;
  align-items: center;
  width: 22px;
  height: 66px;
  margin: 0 1px;
  border: 1px solid #2a2a2a;
  border-right-color: #5c5c5c;
  border-bottom-color: #5c5c5c;
`;
const ShelfTab = styled.button`
  width: 12px;
  height: 10px;
  margin-bottom: 3px;
  border-radius: 2px;
  background: #7d7d7d;
  box-shadow: 0 0 0 1px #2f2f2f;
`;
const ShelfMenu = styled.button`
  display: grid;
  place-items: center;
  width: 18px;
  height: 17px;
  border-top: 1px solid #bbb;
`;
const ShelfMain = styled.div`
  flex: 1;
  min-width: 0;
  display: flex;
  flex-direction: column;
  height: 67px;
`;
const TabRow = styled.div`
  display: flex;
  align-items: flex-end;
  height: 21px;
`;
const Tab = styled.button<{ $on?: boolean }>`
  height: ${p => (p.$on ? 21 : 18)}px;
  padding: 3px 15px 0 14px;
  border: solid #292929;
  border-width: 1px 1px 0 0;
  border-radius: ${p => (p.$on ? '4px 4px 0 0' : '0')};
  background: ${p => (p.$on ? '#646464' : 'linear-gradient(#4a4a4a, #3c3c3c)')};
  line-height: 14px;
  white-space: nowrap;
  &:first-child { border-left-width: 1px; }
`;
const ShelfOuter = styled.div`
  flex: 1;
  padding: 2px;
  border: 1px solid #2c2c2c;
  border-top-color: #646464;
  border-radius: 3px;
`;
const ShelfInner = styled.div`
  display: flex;
  align-items: center;
  height: 100%;
  padding-left: 2px;
  border: 1px solid #2a2a2a;
  border-radius: 3px;
  box-shadow: 0 0 0 1px #555;
`;

const Main = styled.main`
  flex: 1;
  min-height: 0;
  display: flex;
  border-top: 1px solid #2c2c2c;
`;
const ToolColumn = styled.aside`
  flex: none;
  display: flex;
  flex-direction: column;
  align-items: flex-start;
  width: 42px;
  margin-right: 4px;
  padding: 8px 0 0 5px;
  border-right: 1px solid #636363;
`;
const ToolGrip = styled.div`display: flex; width: 34px; height: 5px; margin-bottom: 1px;`;
const ToolGroup = styled.div<{ $h: number; $top?: number }>`
  flex: none;
  display: flex;
  flex-direction: column;
  justify-content: space-between;
  height: ${p => p.$h}px;
  margin-top: ${p => p.$top ?? 0}px;
`;
const ToolButton = styled.button<{ $on?: boolean }>`
  width: 34px;
  height: 35px;
  display: grid;
  place-items: center;
  border: 1px solid #2a2a2a;
  border-radius: 2px;
  box-shadow: inset 0 0 0 1px #5d5d5d;
  background: ${p => (p.$on ? '#9c9c9c' : 'transparent')};
`;
const LayoutButton = styled.button`
  width: 34px;
  height: 33px;
`;
const LogoSlot = styled.div`
  margin-top: auto;
  padding: 0 0 6px 1px;
`;

const Panel = styled.section`
  flex: 1;
  min-width: 0;
  display: flex;
  flex-direction: column;
  margin: 2px 0 1px;
  border: 1px solid #8a8a8a;
`;
const PanelBar = styled.div`
  flex: none;
  display: flex;
  align-items: center;
  height: 21px;
  padding-bottom: 2px;
`;
const Viewport = styled.div`
  position: relative;
  flex: 1;
  min-height: 0;
  overflow: hidden;
  background: linear-gradient(#7c8fa5, #5b6977 33%, #49545e 50%, #2f343b 77%, #19191b);
`;
const Scene = styled.svg`
  position: absolute;
  inset: 0;
  width: 100%;
  height: 100%;
`;
const Cube = styled.svg`
  position: absolute;
  top: 14px;
  right: 11px;
`;
const Axis = styled.svg`
  position: absolute;
  left: 8px;
  bottom: 15px;
`;
const CameraName = styled.span`
  position: absolute;
  left: 0;
  right: 8px;
  bottom: 5px;
  text-align: center;
  font: 700 12px/14px 'Liberation Mono', monospace;
  color: #04461f;
`;

const Side = styled.aside`
  flex: none;
  position: relative;
  display: flex;
  flex-direction: column;
  width: 237px;
  padding: 0 2px 2px 9px;
`;
const SideHeader = styled.div`
  display: flex;
  align-items: center;
  gap: 11px;
  height: 22px;
  font-size: 10px;
  white-space: nowrap;
`;
const HeaderButtons = styled.div`display: flex; gap: 2px;`;
const SmallButton = styled.button`
  width: 14px;
  height: 14px;
  display: grid;
  place-items: center;
  border: 1px solid #2b2b2b;
  border-radius: 3px;
  background: #555;
`;
const ChannelTools = styled.div`
  display: flex;
  justify-content: flex-end;
  height: 21px;
`;
const Badge = styled.div`
  position: absolute;
  top: 4px;
  right: 16px;
  width: 60px;
  height: 60px;
  border-radius: 50%;
  background: #0c9152;
  display: grid;
  place-items: center;
`;
const ChannelBox = styled.div`
  flex: 1;
  border: 2px solid #303030;
  outline: 1px solid #5a5a5a;
  outline-offset: -1px;
  background: #2a2a2a;
`;
const Splitter = styled.div`
  flex: none;
  display: flex;
  align-items: center;
  justify-content: center;
  height: 13px;
`;
const Dots = styled.span`
  width: 74px;
  height: 2px;
  background: repeating-linear-gradient(90deg, #777 0 2px, transparent 2px 5px);
`;
const VerticalDots = styled.span`
  position: absolute;
  left: 4px;
  top: 250px;
  width: 2px;
  height: 244px;
  background: repeating-linear-gradient(#636363 0 2px, transparent 2px 5px);
`;
const LayerFrame = styled.div`
  flex: none;
  display: flex;
  flex-direction: column;
  height: 182px;
  padding: 1px 3px 2px;
  border: 1px solid #2c2c2c;
  border-radius: 2px;
  box-shadow: inset 0 0 0 1px #5c5c5c;
`;
const LayerTools = styled.div`
  display: flex;
  justify-content: flex-end;
  height: 26px;
`;
const LayerList = styled.div`
  flex: 1;
  display: flex;
  align-items: flex-end;
  padding: 1px;
  border: 1px solid #5a5a5a;
  box-shadow: inset 0 0 0 1px #222;
  background: #2a2a2a;
`;
const ScrollRow = styled.div`
  flex: 1;
  display: flex;
  gap: 2px;
  height: 18px;
  padding: 1px 3px 2px 1px;
`;
const ScrollButton = styled.button`
  width: 14px;
  display: grid;
  place-items: center;
  background: #5c5c5c;
`;
const ScrollTrack = styled.div`
  flex: 1;
  display: flex;
  background: repeating-conic-gradient(#3e3e3e 0 25%, #262626 0 50%) 0 0 / 2px 2px;
`;
const ScrollThumb = styled.div`
  width: 60%;
  display: grid;
  place-items: center;
  background: linear-gradient(#6d6d6d, #5a5a5a);
`;
const ThumbDots = styled.span`
  width: 20px;
  height: 11px;
  background: radial-gradient(circle at 1px 1px, #2c2c2c 1px, transparent 1px) 0 0 / 4px 4px;
`;

const Timeline = styled.div`
  flex: 1;
  display: flex;
  height: 30px;
  margin-bottom: 1px;
  padding: 0 7px 0 8px;
  border: 1px solid #1f1f1f;
  border-right-color: #5f5f5f;
  border-bottom-color: #6b6b6b;
  background: #2a2a2a;
`;
const Frame = styled.div<{ $on?: boolean }>`
  flex: 1 1 0;
  padding-left: 13px;
  line-height: 12px;
  color: #646464;
  background: linear-gradient(#666, #666) 0 100% / 2px 14px no-repeat, ${p => (p.$on ? '#242424' : 'transparent')};
`;
const Current = styled.div`
  margin-top: 2px;
  color: #fff;
`;

const Field = styled.input<{ $h?: number }>`
  flex: none;
  width: 69px;
  height: ${p => p.$h ?? 22}px;
  padding: 2px 3px 0;
  border: 1px solid #515151;
  border-radius: 3px;
  background: #2a2a2a;
  outline: 0;
`;
const PlayButtons = styled.div`
  flex: none;
  display: flex;
  width: 222px;
  margin-left: 4px;
`;
const PlayButton = styled.button`
  flex: 1;
  display: grid;
  place-items: center;
`;
const RangeGroup = styled.div`
  flex: 1;
  display: flex;
  align-items: center;
  gap: 3px;
`;
const RangeTrack = styled.div`
  flex: 1;
  display: flex;
  height: 22px;
  padding: 3px 8px 1px;
  border-right: 1px solid #666;
  border-bottom: 1px solid #666;
  background: #252525;
`;
const RangeBar = styled.div`
  display: flex;
  align-items: center;
  justify-content: space-between;
  padding: 2px 4px 0;
  background: linear-gradient(#666, #626262);
`;
const RangeEnd = styled.span`
  display: flex;
  align-items: center;
  gap: 4px;
`;
const RangeHandle = styled.span`
  width: 11px;
  height: 12px;
  border: solid #222;
  border-width: 0 1px 1px 0;
`;
const DropMark = styled.button`
  width: 21px;
  height: 20px;
  display: grid;
  place-items: center;
`;
const SetSelect = styled.select`
  appearance: none;
  width: 103px;
  height: 23px;
  padding: 3px 2px 0;
  border: 1px solid #535353;
  border-radius: 3px;
  background: #464646;
`;

const MelLabel = styled.label`
  width: 46px;
  padding-left: 11px;
`;
const Command = styled.input`
  flex: 1;
  min-width: 0;
  height: 25px;
  border: 1px solid #515151;
  border-radius: 3px;
  background: #2a2a2a;
  outline: 0;
`;
const Result = styled.output`
  flex: 1;
  height: 25px;
  margin: 0 1px 0 6px;
  border: 1px solid #222;
  background: #000;
`;
const HelpLine = styled.div`
  flex: 1;
  height: 23px;
  padding-left: 12px;
  border: 1px solid #262626;
  border-right-color: #606060;
  border-bottom-color: #606060;
  font-size: 11px;
  line-height: 22px;
`;
const Watermark = styled.a`
  position: absolute;
  right: 10px;
  bottom: 8px;
  font: 16px/22px 'Liberation Sans', sans-serif;
  color: #c4c4c4;
  text-shadow: 0 0 1px #666;
  text-decoration: none;
`;

/* ---------- scene ---------- */

/** Perspective projection of a ground-plane point onto the viewport. */
const project = (u: number, v: number): Pt => {
  const s = u + v;
  const w = 1 - 0.014 * s;
  return [864.6 + (25.08 * (u - v)) / w, (550.2 + 4.02 * s) / w];
};
const gridLine = (a: Pt, b: Pt) => {
  const [p, q] = [project(...a), project(...b)];
  return `M${p[0].toFixed(1)} ${p[1].toFixed(1)}L${q[0].toFixed(1)} ${q[1].toFixed(1)}`;
};
const HALF = 12;
const steps = Array.from({ length: HALF * 2 + 1 }, (_, i) => i - HALF).filter(i => i !== 0);
const minor = steps.map(i => gridLine([i, -HALF], [i, HALF]) + gridLine([-HALF, i], [HALF, i])).join('');
const major = gridLine([0, -HALF], [0, HALF]) + gridLine([-HALF, 0], [HALF, 0]);

const Ground = () => (
  <Scene viewBox="47 198 1635 705" preserveAspectRatio="xMidYMid slice">
    <path d={minor} fill="none" stroke="#82807e" shapeRendering="crispEdges" />
    <path d={major} fill="none" stroke="#000" strokeWidth="1.600" shapeRendering="crispEdges" />
  </Scene>
);

const ViewCube = () => (
  <Cube width="82" height="92" viewBox="0 0 82 92">
    <defs>
      <radialGradient id="cubeShadow"><stop offset=".4" stopColor="#2d3842" stopOpacity=".6" /><stop offset="1" stopColor="#2d3842" stopOpacity="0" /></radialGradient>
      <linearGradient id="cubeFace" x2="0" y2="1"><stop offset="0" stopColor="#a9b5c4" /><stop offset="1" stopColor="#8f9aa7" /></linearGradient>
    </defs>
    <ellipse cx="41" cy="63" rx="38" ry="24" fill="url(#cubeShadow)" />
    <path d="M7 18L41 32v44L10 57z" fill="url(#cubeFace)" />
    <path d="M75 18L41 32v44l31-19z" fill="url(#cubeFace)" />
    <path d="M41 6l34 12-34 14L7 18z" fill="#adb8c7" />
    <path d="M7 18l34 14 34-14M41 6l34 12-3 39-31 19-31-19L7 18z" fill="none" stroke="#5f6b78" strokeDasharray="4 2" />
    <path d="M41 32v44" stroke="#3f4a55" />
    <g fill="#66717d" fontFamily="'Noto Sans CJK SC', sans-serif" fontWeight="300" fontSize="19" textAnchor="middle">
      <text transform="translate(24 54) skewY(20)">前</text>
      <text transform="translate(58 54) skewY(-20)">右</text>
      <text transform="translate(41 24) rotate(-18)" fontSize="15">上</text>
    </g>
  </Cube>
);

/* ---------- page ---------- */

const menus = ['文件', '编辑', '修改', '创建', '显示', '窗口', '资源', '编辑曲线', '曲面', '编辑 NURBS', '肌肉', '流水线缓存', '帮助'];
const shelfTabs = ['常规', '曲线', '曲面', '多边形', '变形', '动画', '动力学', '渲染', 'PaintEffects', '卡通', '肌肉', '流体', '毛发', 'nHair', 'nCloth', '自定义'];

const Group = ({ set, on, label }: { set: Record<string, ReactNode>; on?: string; label: string }) => (
  <>
    {Object.entries(set).map(([name, art]) => (
      <IconButton key={name} $w={26} $on={name === on} aria-label={`${label} ${name}`}>
        <svg width="22" height="22" viewBox="0 0 24 24">{art}</svg>
      </IconButton>
    ))}
  </>
);

const Down = () => <svg width="10" height="6" viewBox="0 0 10 6"><path d="M1 1h8L5 5z" fill="#666" stroke="#a5a5a5" /></svg>;

export default function App() {
  return (
    <Window>
      <Global />
      <Defs />
      <TitleBar>
        <MayaLogo size={20} />
        <Title>Autodesk Maya 2014: <SceneName>无标题</SceneName>*</Title>
        <WinButton aria-label="最小化"><svg width="12" height="12"><path d="M0 5.500h12" stroke="#fff" /></svg></WinButton>
        <WinButton aria-label="还原"><svg width="13" height="13"><path d="M.5 3.500h9v9h-9zM3.500 3V.5h9v9h-3" fill="none" stroke="#fff" /></svg></WinButton>
        <WinButton aria-label="关闭"><svg width="13" height="13"><path d="M.5.5l12 12M12.500.5l-12 12" stroke="#fff" strokeWidth="1.200" /></svg></WinButton>
      </TitleBar>

      <MenuRow $h={19} $pad={9}>
        {menus.map(m => <MenuItem key={m}>{m}</MenuItem>)}
      </MenuRow>

      <Row $h={33} $right={3}>
        <Grip />
        <SelectWrap>
          <Select aria-label="菜单集"><option>曲面</option></Select>
          <SelectArrow><svg width="8" height="6"><path d="M0 0h8L4 5z" fill="#ccc" /></svg></SelectArrow>
        </SelectWrap>
        <Handle />
        <Group set={files} label="文件" /><More />
        <Handle />
        <Group set={modes} on="object" label="选择" /><More />
        <Handle w={12} />
        <Group set={snaps} label="捕捉" /><More />
        <Handle />
        <Group set={renders} label="渲染" /><More />
        <Spacer />
        <Group set={sidebars} on="channel" label="侧栏" />
      </Row>

      <Row $h={73}>
        <Grip />
        <ShelfSide>
          <ShelfTab aria-label="工具架选项卡" />
          <ShelfMenu aria-label="工具架菜单"><Down /></ShelfMenu>
        </ShelfSide>
        <ShelfMain>
          <TabRow>
            {shelfTabs.map(t => <Tab key={t} $on={t === '多边形'}>{t}</Tab>)}
            <Spacer />
            <IconButton $w={18} $h={21} aria-label="删除">
              <svg width="16" height="18" viewBox="0 0 16 18"><ellipse cx="5" cy="14" rx="5" ry="2" fill="#222" /><path d="M4 4h10l-1 12H5z" fill="#8f8f8f" /><path d="M6.500 7v8M9 7v8M11.500 7v8" stroke="#2e2e2e" /><ellipse cx="9" cy="4" rx="5.500" ry="2" fill="#b5b5b5" stroke="#333" strokeWidth="0.600" /></svg>
            </IconButton>
          </TabRow>
          <ShelfOuter>
            <ShelfInner>
              {shelf.map(([name, art]) => (
                <IconButton key={name} $w={35} $h={34} aria-label={name}>
                  <svg width="33" height="33" viewBox="0 0 32 32">{art}</svg>
                </IconButton>
              ))}
            </ShelfInner>
          </ShelfOuter>
        </ShelfMain>
      </Row>

      <Main>
        <ToolColumn>
          <ToolGrip><Grip $wide /></ToolGrip>
          <ToolGroup $h={220}>
            {tools.map(([name, art], i) => (
              <ToolButton key={name} $on={i === 0} aria-label={name}>
                <svg width="30" height="30" viewBox="0 0 32 32">{art}</svg>
              </ToolButton>
            ))}
          </ToolGroup>
          <ToolGroup $h={35} $top={37}><ToolButton aria-label="最近的工具" /></ToolGroup>
          <ToolGroup $h={223} $top={14}>
            {layouts.map(([name, art]) => (
              <LayoutButton key={name} aria-label={name}>
                <svg width="34" height="33" viewBox="0 0 34 33">{art}</svg>
              </LayoutButton>
            ))}
          </ToolGroup>
          <ToolGroup $h={35} $top={3}><ToolButton aria-label="更多布局"><svg width="6" height="4"><path d="M0 0h6L3 3z" fill="#888" /></svg></ToolButton></ToolGroup>
          <LogoSlot><MayaLogo size={32} /></LogoSlot>
        </ToolColumn>

        <Panel>
          <MenuRow $h={19} $pad={8}>
            {['视图', '着色', '照明', '显示', '渲染器', '面板'].map(m => <MenuItem key={m}>{m}</MenuItem>)}
          </MenuRow>
          <PanelBar>
            {panelIcons.map((it, i) => it
              ? (
                <IconButton key={i} $w={20} $on={it[2]} aria-label={it[0]}>
                  <svg width="16" height="16" viewBox="0 0 18 18">{it[1]}</svg>
                </IconButton>
              )
              : <Handle key={i} w={11} h={18} />)}
          </PanelBar>
          <Viewport>
            <Ground />
            <ViewCube />
            <Axis width="34" height="34" viewBox="0 0 34 34">
              <path d="M17 23V11" stroke="#0f0" /><path d="M17 23l-8 4" stroke="#00f" /><path d="M17 23l8 4" stroke="#f00" />
              <g fontFamily="'Liberation Mono', monospace" fontWeight="700" fontSize="11">
                <text x="13" y="8" fill="#0f0">y</text><text x="3" y="27" fill="#00f">z</text><text x="25" y="27" fill="#f00">x</text>
              </g>
            </Axis>
            <CameraName>persp</CameraName>
          </Viewport>
        </Panel>

        <Side>
          <VerticalDots />
          <SideHeader>
            <Grip $wide />通道盒/层编辑器<Grip $wide />
            <HeaderButtons>
              <SmallButton aria-label="浮动"><svg width="8" height="8"><path d="M1 3h4v4H1zM3 3V1h4v4H5" fill="none" stroke="#111" strokeWidth="1.500" /></svg></SmallButton>
              <SmallButton aria-label="关闭面板"><svg width="8" height="8"><path d="M1 1l6 6M7 1L1 7" stroke="#111" strokeWidth="1.600" /></svg></SmallButton>
            </HeaderButtons>
          </SideHeader>
          <ChannelTools>
            <IconButton $w={22} aria-label="速度"><svg width="20" height="20" viewBox="0 0 20 20"><path d="M3 17L14 7" stroke="#999" strokeWidth="2" /><path d="M17 4l-2 7-5-5z" fill="#aaa" /></svg></IconButton>
          </ChannelTools>
          <MenuRow $h={23} $pad={7}>
            {['通道', '编辑', '对象', '显示'].map(m => <MenuItem key={m}>{m}</MenuItem>)}
          </MenuRow>
          <ChannelBox />
          <Badge>
            <svg width="52" height="38" viewBox="0 0 52 38" fill="none" stroke="#fff" strokeWidth="3" strokeLinecap="round" strokeLinejoin="round">
              <path d="M37 27V15C37 6 32 2 26 2c-6 0-10 4-11 10C7 12 2 17 2 24c0 6 4 11 11 11h27c6 0 10-4 10-10 0-5-3-9-7-11" />
              <path d="M31 21l6 7 6-7" />
            </svg>
          </Badge>
          <Splitter><Dots /></Splitter>
          <TabRow>
            {['显示', '渲染', '动画'].map((t, i) => <Tab key={t} $on={i === 0}>{t}</Tab>)}
          </TabRow>
          <LayerFrame>
            <MenuRow $h={20} $pad={7}>
              {['层', '选项', '帮助'].map(m => <MenuItem key={m}>{m}</MenuItem>)}
            </MenuRow>
            <LayerTools>
              {layerIcons.map(([name, art]) => (
                <IconButton key={name} $w={26} $h={24} aria-label={name}>
                  <svg width="20" height="20" viewBox="0 0 24 24">{art}</svg>
                </IconButton>
              ))}
            </LayerTools>
            <LayerList>
              <ScrollRow>
                <ScrollButton aria-label="向左"><svg width="5" height="8"><path d="M5 0v8L0 4z" fill="#ddd" /></svg></ScrollButton>
                <ScrollTrack><ScrollThumb><ThumbDots /></ScrollThumb></ScrollTrack>
                <ScrollButton aria-label="向左滚动"><svg width="5" height="8"><path d="M5 0v8L0 4z" fill="#ddd" /></svg></ScrollButton>
                <ScrollButton aria-label="向右滚动"><svg width="5" height="8"><path d="M0 0v8l5-4z" fill="#ddd" /></svg></ScrollButton>
              </ScrollRow>
            </LayerList>
          </LayerFrame>
        </Side>
      </Main>

      <Row $h={36}>
        <Grip />
        <Timeline>
          {Array.from({ length: 24 }, (_, i) => (
            <Frame key={i} $on={i === 0}>{i + 1}{i === 0 && <Current>1</Current>}</Frame>
          ))}
        </Timeline>
        <HandleBox $w={3} />
        <Field aria-label="当前时间" defaultValue="1.00" $h={20} />
        <PlayButtons>
          {playback.map(([name, d, key, x]) => (
            <PlayButton key={name} aria-label={name}>
              <svg width="20" height="20" viewBox="0 0 20 20">
                <path d={d} fill="url(#metal)" stroke="#222" strokeWidth="0.800" />
                {key && <path d={`M${x} 0v20`} stroke="#d01c1c" strokeWidth="1.200" />}
              </svg>
            </PlayButton>
          ))}
        </PlayButtons>
      </Row>

      <Row $h={29}>
        <Grip />
        <RangeGroup>
          <Field aria-label="动画开始" defaultValue="1.00" />
          <Field aria-label="播放开始" defaultValue="1.00" />
          <RangeTrack>
            <RangeBar style={{ width: `${(24 / 48) * 100}%` }}>
              <RangeEnd><RangeHandle />1</RangeEnd>
              <RangeEnd>24<RangeHandle /></RangeEnd>
            </RangeBar>
          </RangeTrack>
          <Field aria-label="播放结束" defaultValue="24.00" />
          <Field aria-label="动画结束" defaultValue="48.00" />
        </RangeGroup>
        <DropMark aria-label="动画层菜单"><Down /></DropMark>
        <SetSelect aria-label="动画层"><option>无动画层</option></SetSelect>
        <DropMark aria-label="角色集菜单"><Down /></DropMark>
        <SetSelect aria-label="角色集"><option>无角色集</option></SetSelect>
        <IconButton $w={24} aria-label="自动关键帧"><svg width="18" height="10" viewBox="0 0 18 10"><circle cx="4" cy="4" r="3" fill="none" stroke="#aaa" strokeWidth="1.600" /><path d="M7 4h10M13 4v4M16 4v4" stroke="#aaa" strokeWidth="1.600" /></svg></IconButton>
        <IconButton $w={16} aria-label="动画首选项"><svg width="16" height="16" viewBox="0 0 16 16"><path d="M1 1h14v14H1z" fill="#f0f0f0" stroke="#222" /><path d="M1 1h14v3H1z" fill="#4f9fe8" /><path d="M3 12l3-5 1 3 3-4 1 3 3-2M5 14l3-4 3 3" fill="none" stroke="#c62020" strokeWidth="1.400" /></svg></IconButton>
      </Row>

      <Row $h={31}>
        <Grip />
        <MelLabel htmlFor="mel">MEL</MelLabel>
        <Command id="mel" />
        <Result />
        <IconButton $w={16} aria-label="脚本编辑器"><svg width="16" height="16" viewBox="0 0 16 16"><path d="M1 1h14v14H1z" fill="#ddd" stroke="#111" /><path d="M1 1h14v3H1z" fill="#4f9fe8" /><path d="M3 5h10v4H3zM3 10h10v4H3z" fill="#999" stroke="#222" /></svg></IconButton>
      </Row>

      <Row $h={29}>
        <Grip />
        <HelpLine>选择工具: 选择一个对象</HelpLine>
      </Row>
      <Watermark href="https://blog.csdn.net/COCO56">https://blog.csdn.net/COCO56</Watermark>
    </Window>
  );
}
